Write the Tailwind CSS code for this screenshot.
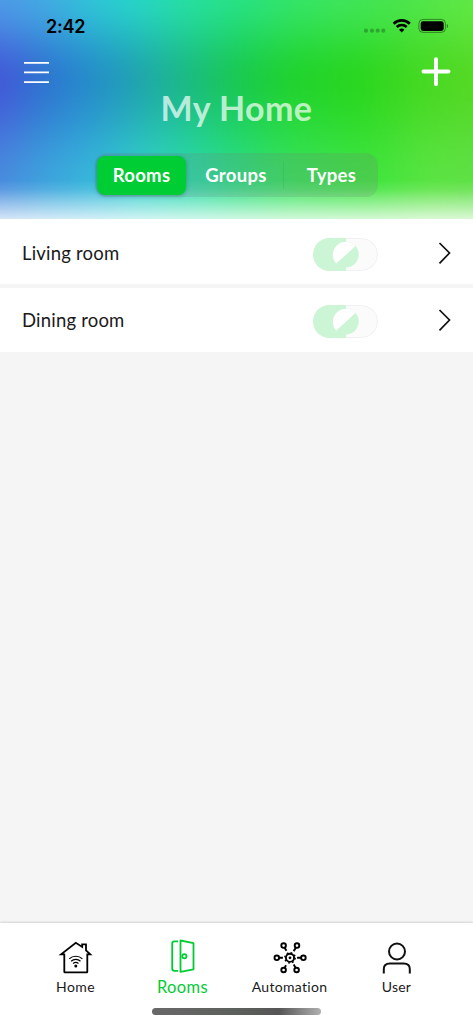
<!DOCTYPE html>
<html lang="en">
<head>
    <meta charset="UTF-8">
    <meta name="viewport" content="width=device-width, initial-scale=1.0">
    <title>My Home</title>
    <script src="https://cdn.jsdelivr.net/npm/@tailwindcss/browser@4"></script>
</head>
<body class="h-screen overflow-hidden bg-[#f5f5f5] font-[Lato,sans-serif] text-[#1a1a1a]">
    <div class="flex h-full flex-col">
        <!-- Header -->
        <header class="relative h-[219px] shrink-0 overflow-hidden">
            <!-- Colour wash: three bands faded into each other and blurred, then faded to white -->
            <div class="absolute -inset-10 blur-[12px]">
                <div class="absolute inset-0 bg-[linear-gradient(to_right,#4355d8_40px,#2f6fd0_80px,#2685cd_120px,#2198bb_160px,#1dae9c_200px,#19bd74_240px,#18c84c_280px,#1fd22c_330px,#28d61c_400px,#44d820_460px,#55d823_513px)]"></div>
                <div class="absolute inset-0 bg-[linear-gradient(to_right,#4f9be8_40px,#42ade2_90px,#30c4d8_130px,#28d4cc_170px,#27e0a0_230px,#28e283_280px,#36e566_340px,#4ae54d_440px,#62e845_513px)] [mask-image:linear-gradient(to_bottom,black_40px,rgba(0,0,0,0.8)_60px,rgba(0,0,0,0.3)_90px,transparent_118px)]"></div>
                <div class="absolute inset-0 bg-[linear-gradient(to_right,#4a8cde_40px,#3fa3dd_80px,#38b8dc_130px,#33d0cc_180px,#2cdcaa_230px,#2ce080_280px,#38e45c_330px,#3fe53f_410px,#5ce444_470px,#5fe047_513px)] [mask-image:linear-gradient(to_bottom,transparent_118px,rgba(0,0,0,0.3)_155px,rgba(0,0,0,0.75)_190px,black_225px)]"></div>
            </div>
            <div class="absolute inset-0 bg-[linear-gradient(to_bottom,transparent_180px,rgba(255,255,255,0.12)_190px,rgba(255,255,255,0.42)_203px,rgba(255,255,255,0.75)_218px)]"></div>

            <div class="relative flex h-full flex-col">
                <!-- Status bar -->
                <div class="flex h-[52px] items-center justify-between pr-[25px] pl-[46px] text-black">
                    <span class="font-[Inter,sans-serif] text-[18px] font-semibold tracking-[-0.2px]">2:42</span>
                    <svg class="h-5 w-[84px]" viewBox="364 16 84 20" fill="none">
                        <g fill="#000" fill-opacity=".25">
                            <circle cx="366" cy="30.700" r="2.100"/><circle cx="372" cy="30.700" r="2.100"/><circle cx="377.700" cy="30.700" r="2.100"/><circle cx="383.300" cy="30.700" r="2.100"/>
                        </g>
                        <path d="M393.600 23.700a11.600 11.600 0 0 1 16.200 0M396.700 27a7.200 7.200 0 0 1 10 0" stroke="#000" stroke-width="2.600"/>
                        <path d="M401.700 32.600l-2.700-2.800a4 4 0 0 1 5.400 0z" fill="#000"/>
                        <rect x="418.900" y="19.400" width="26.500" height="13" rx="4" stroke="#000" stroke-opacity=".4"/>
                        <rect x="420.700" y="21.200" width="23" height="9.700" rx="2.300" fill="#000"/>
                        <path d="M446.800 23.900v4.200q1.300-.6 1.300-2.100t-1.300-2.100z" fill="#000" fill-opacity=".45"/>
                    </svg>
                </div>

                <!-- Menu, add -->
                <div class="flex h-10 items-center justify-between pr-[22px] pl-6">
                    <svg class="h-6 w-[25px]" viewBox="0 0 25 24" stroke="#fff" stroke-width="1.800">
                        <path d="M0 2.800h25M0 12.400h25M0 22.200h25"/>
                    </svg>
                    <svg class="h-[30px] w-[30px]" viewBox="0 0 30 30" stroke="#fff" stroke-width="4" stroke-linecap="round">
                        <path d="M2.500 14.600h25M15 2.200v25"/>
                    </svg>
                </div>

                <h1 class="-mt-1 text-center text-[34px] leading-[40px] font-bold tracking-[0.4px] text-white/70">My Home</h1>

                <!-- Segmented control -->
                <div class="mt-[25px] ml-[95px] flex h-[44px] w-[283px] items-center rounded-xl bg-[#767680]/20 px-0.5 text-[18.5px] font-bold tracking-[0.3px] text-white">
                    <div class="flex h-[39px] w-[89px] items-center justify-center rounded-lg bg-[#00cc33] pt-px shadow-[0_1px_4px_rgba(0,0,0,0.25)]">Rooms</div>
                    <div class="flex h-[27px] w-[98px] items-center justify-center border-r border-black/5 pt-px pl-[3px]">Groups</div>
                    <div class="flex flex-1 items-center justify-center pt-px pl-[3px]">Types</div>
                </div>
            </div>
        </header>

        <!-- Room list -->
        <main class="flex-1 text-[18.5px]">
            <div class="mb-1 flex h-[65px] items-center bg-white px-[22px] pt-1">
                <span class="w-[291px] tracking-[0.2px]">Living room</span>
                <svg class="mt-px h-[33px] w-[65px]" viewBox="0 0 65 33">
                    <rect x=".5" y=".5" width="64" height="32" rx="16" fill="#fbfbfb" stroke="#f1f1f1"/>
                    <path d="M33 0H16.500a16.500 16.500 0 0 0 0 33H33z" fill="#ccf5d6"/>
                    <circle cx="32.700" cy="16.500" r="13" fill="#ccf5d6"/>
                    <path d="M23.300 25.600A13 13 0 0 1 42.500 8z" fill="#fff"/>
                </svg>
                <svg class="-mt-px ml-auto h-[23px] w-[13px]" viewBox="0 0 13 23" fill="none" stroke="#111" stroke-width="1.700">
                    <path d="M1.500 1l10 10-10 10.300"/>
                </svg>
            </div>
            <div class="flex h-16 items-center bg-white px-[22px] pt-0.5">
                <span class="w-[291px] tracking-[0.2px]">Dining room</span>
                <svg class="h-[33px] w-[65px]" viewBox="0 0 65 33">
                    <rect x=".5" y=".5" width="64" height="32" rx="16" fill="#fbfbfb" stroke="#f1f1f1"/>
                    <path d="M33 0H16.500a16.500 16.500 0 0 0 0 33H33z" fill="#ccf5d6"/>
                    <circle cx="32.700" cy="16.500" r="13" fill="#ccf5d6"/>
                    <path d="M23.300 25.600A13 13 0 0 1 42.500 8z" fill="#fff"/>
                </svg>
                <svg class="-mt-0.5 ml-auto h-[23px] w-[13px]" viewBox="0 0 13 23" fill="none" stroke="#111" stroke-width="1.700">
                    <path d="M1.500 1l10 10-10 10.300"/>
                </svg>
            </div>
        </main>

        <!-- Tab bar -->
        <nav class="relative flex h-[101px] shrink-0 bg-white px-[22px] pt-[15px] text-[14px] shadow-[0_-1px_2px_rgba(0,0,0,0.14)]">
            <a class="flex w-[107px] flex-col items-center">
                <svg class="h-[38px] w-[38px]" viewBox="0 0 38 38" fill="none" stroke="#000" stroke-width="1.800">
                    <path d="M7.300 16.300v17.400q0 .6.600.6h21.800q.6 0 .6-.6V16.300h3l-4.300-4V6.300h-3.800v2.600L18.800 4.800 4.100 16.300z"/>
                    <g stroke-width="1.200">
                        <path d="M12.200 20.900a9.500 9.500 0 0 1 13.200 0M14.100 23.200a6.900 6.900 0 0 1 9.400 0M16.100 25.500a4 4 0 0 1 5.400 0"/>
                    </g>
                    <circle cx="18.800" cy="27.900" r="1.500" fill="#000" stroke="none"/>
                </svg>
                <span class="mt-px leading-5 tracking-[0.4px]">Home</span>
            </a>
            <a class="flex w-[107px] flex-col items-center text-[#00cc33]">
                <svg class="h-[38px] w-[38px]" viewBox="0 0 38 38" fill="none" stroke="currentColor" stroke-width="1.800" stroke-linejoin="round">
                    <path d="M14 3.300H10.500q-2.300 0-2.300 2.300v25q0 2.300 2.300 2.300H14"/>
                    <path d="M16.500 2.500l13 2.600v26.300l-13 2.500z"/>
                    <circle cx="20.400" cy="18.200" r="2.100"/>
                </svg>
                <span class="mt-px text-[16.500px] leading-5 tracking-[0.4px]">Rooms</span>
            </a>
            <a class="flex w-[107px] flex-col items-center">
                <svg class="h-[38px] w-[38px]" viewBox="0 0 38 38" fill="none" stroke="#000" stroke-width="1.900">
                    <circle cx="19" cy="19.800" r="4.100"/>
                    <circle cx="19" cy="19.800" r="5.200" stroke-width="1.400" stroke-dasharray="1.700 2.384"/>
                    <circle cx="19" cy="19.800" r="1.400" fill="#000" stroke="none"/>
                    <circle cx="5.800" cy="19.800" r="2.300"/><circle cx="32.400" cy="19.800" r="2.300"/>
                    <circle cx="12.600" cy="7.600" r="2.300"/><circle cx="26" cy="7.600" r="2.300"/>
                    <circle cx="12.600" cy="32" r="2.300"/><circle cx="25.600" cy="32" r="2.300"/>
                    <path d="M8.100 19.800h3.800M26.100 19.800h4M13.600 9.700l1.900 3.100M24.900 9.700l-2.300 3.400M13.600 29.900l1.400-2.600M24.600 29.900l-1.900-3.400"/>
                </svg>
                <span class="mt-px leading-5 tracking-[0.3px]">Automation</span>
            </a>
            <a class="flex w-[107px] flex-col items-center">
                <svg class="h-[38px] w-[38px]" viewBox="0 0 38 38" fill="none" stroke="#111" stroke-width="2">
                    <circle cx="19" cy="13.500" r="8"/>
                    <path d="M5.800 35.500V31q0-5.500 6-5.500h14q6 0 6 5.500v4.500"/>
                </svg>
                <span class="mt-px leading-5 tracking-[0.2px]">User</span>
            </a>
            <div class="absolute top-[85px] left-[152px] h-[7px] w-[169px] rounded-full bg-[linear-gradient(to_right,#686868,#5c605c_50%,#555_75%,#b0b0b0)]"></div>
        </nav>
    </div>
</body>
</html>
